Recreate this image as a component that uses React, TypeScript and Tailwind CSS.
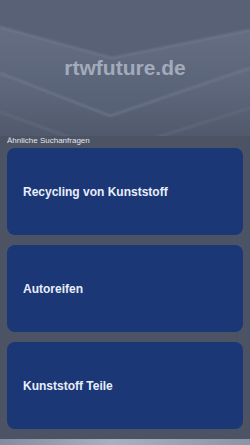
import React from 'react';

const searches = ['Recycling von Kunststoff', 'Autoreifen', 'Kunststoff Teile'];

function HeaderArt() {
  return (
    <svg
      className="absolute inset-0 h-full w-full"
      viewBox="0 0 250 136"
      preserveAspectRatio="none"
    >
      <defs>
        <linearGradient id="bandA" x1="0" y1="0" x2="0" y2="1">
          <stop offset="0" stopColor="#656e83" />
          <stop offset="1" stopColor="#566075" />
        </linearGradient>
        <linearGradient id="bandB" x1="0" y1="0" x2="0" y2="1">
          <stop offset="0" stopColor="#626b80" />
          <stop offset="1" stopColor="#515a6d" />
        </linearGradient>
        <filter id="soft">
          <feGaussianBlur stdDeviation="0.9" />
        </filter>
      </defs>
      <rect width="250" height="136" fill="#5a6377" />
      <polygon points="0,0 250,0 250,30 112,58 0,27" fill="#586176" />
      <polygon points="0,27 112,58 250,30 250,68 110,116 0,73" fill="url(#bandA)" />
      <polygon points="0,73 110,116 250,68 250,136 0,136" fill="url(#bandB)" />
      <g filter="url(#soft)" fill="none">
        <polyline points="0,27 112,58 250,30" stroke="#727b90" strokeWidth="1.6" />
        <polyline points="0,73 110,116 250,68" stroke="#737c91" strokeWidth="1.6" />
        <polyline points="0,112 110,152 250,108" stroke="#656e82" strokeWidth="1.4" />
      </g>
    </svg>
  );
}

export default function App() {
  return (
    <div className="flex min-h-[445px] w-[250px] flex-col bg-[#4c5364] font-['Liberation_Sans',Arial,sans-serif]">
      <header className="relative flex h-[136px] items-center justify-center overflow-hidden">
        <HeaderArt />
        <h1 className="relative text-[21px] font-bold text-[#a3abbb]">
          rtwfuture.de
        </h1>
      </header>

      <section className="flex flex-col px-[7px] pb-[10px]">
        <p className="h-[12px] text-[8px] leading-[10px] text-[#e3e6ec]">
          Ähnliche Suchanfragen
        </p>
        <div className="flex flex-col gap-[10px]">
          {searches.map((item) => (
            <a
              key={item}
              href="#"
              className="flex h-[87px] items-center rounded-[8px] bg-[#1c3775] px-[16px] text-[12px] font-bold text-[#e8eefb]"
            >
              {item}
            </a>
          ))}
        </div>
      </section>

      <footer className="h-[7px] bg-[linear-gradient(90deg,#848ca0,#a9b1c1_45%,#8c94a7)]" />
    </div>
  );
}
